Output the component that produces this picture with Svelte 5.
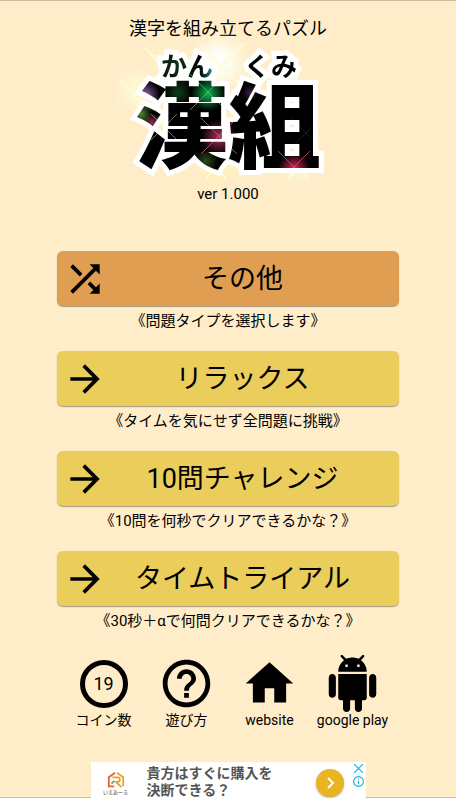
<script lang="ts">
  type MenuItem = {
    label: string;
    caption: string;
    icon: 'shuffle' | 'arrow';
  };

  type Spark = { x: number; y: number; r: number; color: string };

  const menu: MenuItem[] = [
    { label: 'その他', caption: '《問題タイプを選択します》', icon: 'shuffle' },
    { label: 'リラックス', caption: '《タイムを気にせず全問題に挑戦》', icon: 'arrow' },
    { label: '10問チャレンジ', caption: '《10問を何秒でクリアできるかな？》', icon: 'arrow' },
    { label: 'タイムトライアル', caption: '《30秒＋αで何問クリアできるかな？》', icon: 'arrow' },
  ];

  const icons = {
    shuffle:
      'M10.59 9.17L5.41 4 4 5.41l5.17 5.17 1.42-1.41zM14.5 4l2.04 2.04L4 18.59 5.41 20 17.96 7.46 20 9.5V4h-5.5zm.33 9.41l-1.41 1.41 3.13 3.13L14.5 20H20v-5.5l-2.04 2.04-3.13-3.13z',
    arrow: 'M12 4l-1.41 1.41L16.17 11H4v2h12.17l-5.58 5.59L12 20l8-8z',
    help: 'M11 18h2v-2h-2v2zm1-16C6.48 2 2 6.48 2 12s4.48 10 10 10 10-4.48 10-10S17.52 2 12 2zm0 18c-4.41 0-8-3.59-8-8s3.59-8 8-8 8 3.59 8 8-3.59 8-8 8zm0-14c-2.21 0-4 1.79-4 4h2c0-1.1.9-2 2-2s2 .9 2 2c0 2-3 1.75-3 5h2c0-2.25 3-2.5 3-5 0-2.21-1.79-4-4-4z',
    home: 'M10 20v-6h4v6h5v-8h3L12 3 2 12h3v8z',
    android:
      'M6 18c0 .55.45 1 1 1h1v3.5c0 .83.67 1.5 1.5 1.5s1.5-.67 1.5-1.5V19h2v3.5c0 .83.67 1.5 1.5 1.5s1.5-.67 1.5-1.5V19h1c.55 0 1-.45 1-1V8H6v10zM3.5 8C2.67 8 2 8.67 2 9.5v7c0 .83.67 1.5 1.5 1.5S5 17.33 5 16.5v-7C5 8.67 4.33 8 3.5 8zm17 0c-.83 0-1.5.67-1.5 1.5v7c0 .83.67 1.5 1.5 1.5s1.5-.67 1.5-1.5v-7c0-.83-.67-1.5-1.5-1.5zm-4.97-5.84l1.3-1.3c.2-.2.2-.51 0-.71-.2-.2-.51-.2-.71 0l-1.48 1.48C13.85 1.23 12.95 1 12 1c-.96 0-1.86.23-2.66.63L7.85.15c-.2-.2-.51-.2-.71 0-.2.2-.2.51 0 .71l1.31 1.31C6.97 3.26 6 5.01 6 7h12c0-1.99-.97-3.75-2.47-4.84zM10 5H9V4h1v1zm5 0h-1V4h1v1z',
  };

  // glow behind the logo
  const glows: Spark[] = [
    { x: 102, y: 20, r: 34, color: '#ffffee' },
    { x: 100, y: 18, r: 22, color: '#ffffff' },
    { x: 20, y: 48, r: 26, color: '#fffbd8' },
    { x: 48, y: 18, r: 22, color: '#fff3cc' },
    { x: 98, y: 124, r: 18, color: '#fff5a8' },
    { x: 180, y: 124, r: 18, color: '#fff8d8' },
  ];

  // coloured light inside the characters
  const sparks: Spark[] = [
    { x: 27, y: 52, r: 15, color: '#8d66a8' },
    { x: 35, y: 61, r: 8, color: '#5c9a4c' },
    { x: 23, y: 71, r: 11, color: '#4c8a34' },
    { x: 34, y: 80, r: 10, color: '#8a3048' },
    { x: 90, y: 51, r: 17, color: '#12b050' },
    { x: 60, y: 50, r: 14, color: '#12401c' },
    { x: 101, y: 94, r: 18, color: '#a8305a' },
    { x: 88, y: 118, r: 12, color: '#2c4c18' },
    { x: 132, y: 50, r: 8, color: '#3c2048' },
    { x: 176, y: 126, r: 16, color: '#e02858' },
    { x: 95, y: 28, r: 14, color: '#2898a0' },
    { x: 58, y: 22, r: 26, color: '#123418' },
  ];

  const rays = [
    { x: 90, y: 49, r: 18, color: '#30e078' },
    { x: 101, y: 93, r: 18, color: '#e06888' },
    { x: 176, y: 124, r: 16, color: '#f05078' },
    { x: 46, y: 84, r: 13, color: '#a0a090' },
    { x: 188, y: 90, r: 16, color: '#12301a' },
  ];

  let coins = $state(19);
</script>

{#snippet glyph(path: string)}
  <svg viewBox="0 0 24 24" aria-hidden="true"><path d={path} /></svg>
{/snippet}

<main class="page">
  <header class="header">
    <p class="tagline">漢字を組み立てるパズル</p>
    <svg class="logo" viewBox="0 0 220 140" role="img" aria-label="漢組">
      <defs>
        {#each [...glows, ...sparks] as s, i}
          <radialGradient id="light-{i}">
            <stop offset="0" stop-color={s.color} />
            <stop offset="0.5" stop-color={s.color} stop-opacity="0.5" />
            <stop offset="1" stop-color={s.color} stop-opacity="0" />
          </radialGradient>
        {/each}
        <clipPath id="letters">
          <text class="kana" x="43" y="33">かん</text>
          <text class="kana" x="126" y="33">くみ</text>
          <text class="kanji" x="17" y="118">漢組</text>
        </clipPath>
      </defs>

      {#each glows as g, i}
        <circle cx={g.x} cy={g.y} r={g.r} fill="url(#light-{i})" />
      {/each}
      <path class="flare" d="M82 2l44 44M126 0L82 44M26 4l30 30M2 38l44 44M88 136l20-24M108 136l-20-24M170 136l18-22M190 136l-18-22" />

      <g class="outline">
        <text class="kana" x="43" y="33">かん</text>
        <text class="kana" x="126" y="33">くみ</text>
        <text class="kanji" x="17" y="118">漢組</text>
      </g>

      <g clip-path="url(#letters)">
        <rect width="220" height="140" />
        {#each sparks as s, i}
          <circle cx={s.x} cy={s.y} r={s.r} fill="url(#light-{i + glows.length})" />
        {/each}
        {#each rays as r}
          <path
            d="M{r.x - r.r} {r.y - r.r}L{r.x + r.r} {r.y + r.r}M{r.x + r.r} {r.y - r.r}L{r.x - r.r} {r.y + r.r}"
            stroke={r.color}
            opacity="0.7"
          />
        {/each}
      </g>
    </svg>
    <p class="version">ver 1.000</p>
  </header>

  <nav class="menu">
    {#each menu as item}
      <div class="menu-item">
        <button type="button" class="menu-button" class:other={item.icon === 'shuffle'}>
          {@render glyph(icons[item.icon])}
          <span>{item.label}</span>
        </button>
        <p class="caption">{item.caption}</p>
      </div>
    {/each}
  </nav>

  <div class="links">
    <button type="button" class="link">
      <span class="link-icon"><span class="coin">{coins}</span></span>
      コイン数
    </button>
    <button type="button" class="link">
      <span class="link-icon">{@render glyph(icons.help)}</span>
      遊び方
    </button>
    <a class="link" href="#website">
      <span class="link-icon">{@render glyph(icons.home)}</span>
      website
    </a>
    <a class="link" href="#google-play">
      <span class="link-icon">{@render glyph(icons.android)}</span>
      google play
    </a>
  </div>

  <aside class="ad">
    <div class="ad-brand">
      <svg viewBox="0 0 20 18" aria-hidden="true">
        <path d="M9 1L2 6v10h6" stroke="#e8622c" />
        <path d="M11 1l7 5v10" stroke="#f0a020" />
        <path d="M6 6h6c3 0 3 5 0 5h-2l6 6" stroke="#e8a030" />
        <path d="M5 13l3-3" stroke="#5cb040" />
      </svg>
      <span>いえあーる</span>
    </div>
    <p class="ad-text">貴方はすぐに購入を<br />決断できる？</p>
    <a class="ad-go" href="#ad" aria-label="開く">
      <svg viewBox="0 0 28 28" aria-hidden="true"><path d="M12 9l5 5-5 5" /></svg>
    </a>
    <div class="ad-tools">
      <button type="button" aria-label="閉じる">
        <svg viewBox="0 0 12 12" aria-hidden="true"><path d="M2 2l8 8M10 2l-8 8" /></svg>
      </button>
      <button type="button" aria-label="広告について">
        <svg viewBox="0 0 12 12" aria-hidden="true">
          <circle cx="6" cy="6" r="4.5" />
          <path d="M6 5.2v3.3M6 3.2v1" />
        </svg>
      </button>
    </div>
  </aside>
</main>

<style>
  :global(body) {
    background: #feedc8;
  }

  .page {
    box-sizing: border-box;
    min-height: 100vh;
    display: flex;
    flex-direction: column;
    align-items: center;
    padding-top: 14px;
    border-top: 1px solid #cbbd9f;
    background: linear-gradient(#cbbd9f, #cbbd9f) bottom / 100% 1px no-repeat #feedc8;
    color: #000;
    font-family: Roboto, 'Noto Sans CJK JP', sans-serif;
  }

  p {
    margin: 0;
  }

  button {
    padding: 0;
    border: 0;
    background: none;
    color: inherit;
    font: inherit;
    cursor: pointer;
  }

  svg {
    display: block;
  }

  .header {
    display: flex;
    flex-direction: column;
    align-items: center;
  }

  .tagline {
    font-size: 18px;
    line-height: 28px;
  }

  .logo {
    width: 220px;
    height: 140px;
    overflow: visible;
    font-family: 'Noto Sans CJK JP', sans-serif;
  }

  .logo path {
    fill: none;
  }

  .kana {
    font-size: 26px;
    font-weight: 700;
  }

  .kanji {
    font-size: 93px;
    font-weight: 900;
  }

  .outline {
    fill: #fff;
    stroke: #fff;
    stroke-width: 10px;
    stroke-linejoin: miter;
    stroke-miterlimit: 2;
  }

  .flare {
    stroke: #fffbd8;
    stroke-width: 2px;
  }

  .version {
    font-size: 15px;
    line-height: 22px;
  }

  .menu {
    width: 75%;
    display: flex;
    flex-direction: column;
    gap: 16px;
    margin-top: 46px;
  }

  .menu-button {
    box-sizing: border-box;
    width: 100%;
    height: 55px;
    display: flex;
    align-items: center;
    padding: 0 21px 0 6px;
    border-radius: 6px;
    background: #ebcd5b;
    box-shadow: 0 1px 1px rgb(0 0 0 / 35%);
    font-size: 27px;
    line-height: 36px;
  }

  .menu-button.other {
    background: #df9e52;
  }

  .menu-button svg {
    width: 44px;
    height: 44px;
    flex: none;
  }

  .menu-button span {
    flex: 1;
    text-align: center;
  }

  .caption {
    padding-top: 1px;
    font-size: 15px;
    line-height: 28px;
    text-align: center;
    white-space: nowrap;
  }

  .links {
    display: grid;
    grid-template-columns: repeat(4, 83px);
    justify-content: center;
    margin: 20px 0 24px;
  }

  .link {
    display: flex;
    flex-direction: column;
    align-items: center;
    color: inherit;
    font-size: 14px;
    line-height: 16px;
    text-decoration: none;
    white-space: nowrap;
  }

  .link-icon {
    width: 57px;
    height: 57px;
    display: grid;
    place-items: center;
  }

  .link-icon :global(svg) {
    width: 57px;
    height: 57px;
  }

  .coin {
    box-sizing: border-box;
    width: 48px;
    height: 48px;
    display: grid;
    place-items: center;
    border: 5px solid #000;
    border-radius: 50%;
    font-size: 18px;
  }

  .ad {
    box-sizing: border-box;
    width: 60%;
    min-width: 275px;
    height: 36px;
    display: flex;
    align-items: flex-start;
    margin-top: auto;
    padding-left: 12px;
    background: #fff;
    overflow: hidden;
  }

  .ad-brand {
    width: 26px;
    display: flex;
    flex-direction: column;
    align-items: center;
    padding-top: 9px;
    color: #444;
    font-size: 5px;
    line-height: 6px;
    white-space: nowrap;
  }

  .ad-brand svg {
    width: 18px;
    height: 18px;
    fill: none;
    stroke-width: 2px;
  }

  .ad-text {
    flex: 1;
    margin-left: 18px;
    padding-top: 3px;
    color: #555;
    font-size: 14px;
    font-weight: 700;
    line-height: 17px;
  }

  .ad-go {
    width: 28px;
    height: 28px;
    margin: 7px 8px 0 0;
    border-radius: 50%;
    background: #e9b420;
    box-shadow: 0 1px 2px rgb(0 0 0 / 30%);
  }

  .ad-go path {
    fill: none;
    stroke: #fff;
    stroke-width: 2px;
  }

  .ad-tools {
    display: flex;
    flex-direction: column;
    padding-right: 1px;
  }

  .ad-tools svg {
    width: 13px;
    height: 13px;
    fill: none;
    stroke: #18acd0;
  }
</style>
